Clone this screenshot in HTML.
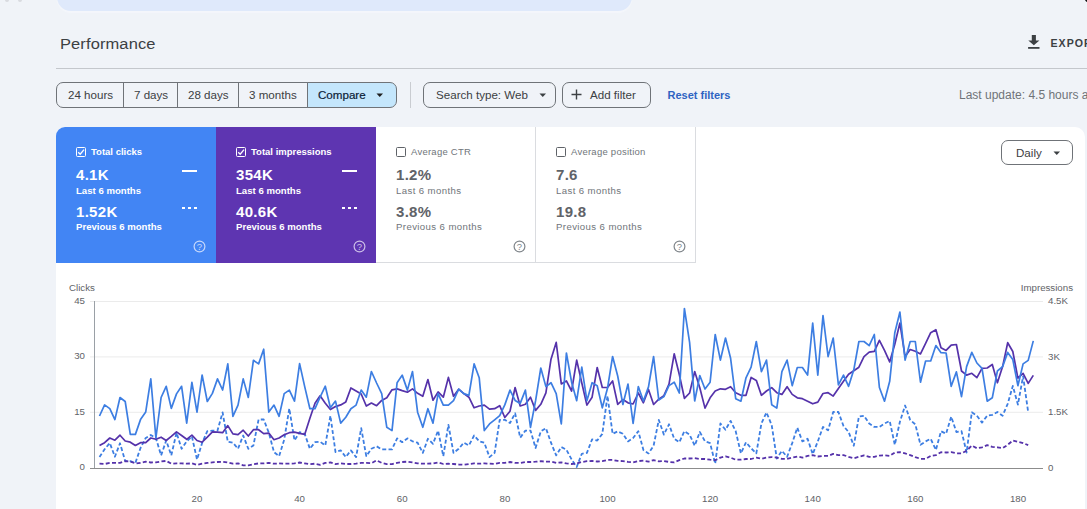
<!DOCTYPE html>
<html><head><meta charset="utf-8">
<style>
*{box-sizing:border-box;margin:0;padding:0}
html,body{width:1087px;height:509px;overflow:hidden}
body{background:#f0f3f8;font-family:"Liberation Sans",sans-serif;color:#3c4043;position:relative}
.abs{position:absolute}
#topbar{left:57px;top:-20px;width:575px;height:31px;background:#dfe9fb;border-radius:0 0 14px 14px;box-shadow:0 2px 1px #f4f6fb}
#title{left:60px;top:35px;font-size:15.2px;letter-spacing:0.1px;transform:scaleX(1.085);transform-origin:0 0;color:#3c4043;white-space:nowrap}
#hr{left:56px;top:68px;width:1031px;height:1px;background:#c4c7cc}
#export{left:1050.5px;top:36.8px;font-size:10.6px;font-weight:bold;letter-spacing:1px;color:#3c4043;white-space:nowrap}
.seg{position:absolute;top:82px;height:26px;border:1px solid #6f7378;font-size:11.6px;line-height:24px;color:#3c4043;white-space:nowrap}
.btn{position:absolute;top:82px;height:26px;border:1px solid #6f7378;border-radius:7px;font-size:11.6px;line-height:24px;color:#3c4043;white-space:nowrap}
#card{left:56px;top:127px;width:1029px;height:400px;background:#fff;border-radius:9px 10px 0 0}
.tile{position:absolute;top:127px;width:160px;height:136px}
.tile .lab{position:absolute;left:35px;top:19px;font-size:9.5px;font-weight:bold;white-space:nowrap}
.tile .v1{position:absolute;left:20px;top:39px;letter-spacing:0.3px;font-size:15px;font-weight:bold;white-space:nowrap}
.tile .s1{position:absolute;left:20px;top:58px;font-size:9.6px;font-weight:bold;white-space:nowrap}
.tile .v2{position:absolute;left:20px;top:76px;letter-spacing:0.3px;font-size:15px;font-weight:bold;white-space:nowrap}
.tile .s2{position:absolute;left:20px;top:94px;font-size:9.6px;font-weight:bold;white-space:nowrap}
.cb{position:absolute;left:20px;top:20px;width:10px;height:10px;border:1.3px solid #fff;border-radius:1.5px}
.wt .lab,.wt .s1,.wt .s2{font-weight:normal;color:#70757a;letter-spacing:0.4px}
.wt .lab{letter-spacing:0.25px}
.ax{font-family:"Liberation Sans",sans-serif;font-size:9.7px;fill:#5f6368}
</style></head><body>
<div class="abs" id="topbar"></div>
<div class="abs" style="left:1083.5px;top:-10px;width:13px;height:12.5px;border-radius:50%;background:#111"></div>
<div class="abs" style="left:5px;top:-2.5px;width:4px;height:4px;border-radius:50%;background:#d9dbe0"></div>
<div class="abs" style="left:17.5px;top:-2.5px;width:4px;height:4px;border-radius:50%;background:#d9dbe0"></div>
<div class="abs" id="title">Performance</div>
<svg class="abs" style="left:1027px;top:34px" width="14" height="16" viewBox="0 0 14 16">
<path d="M4.8 1h4.1v5.5h3.5L6.85 11.2 1.3 6.5h3.5z" fill="#3c4043"/><rect x="1.1" y="13" width="11.4" height="1.8" fill="#3c4043"/></svg>
<div class="abs" id="export">EXPORT</div>
<div class="abs" id="hr"></div>

<div class="seg" style="left:56px;width:68px;border-radius:7px 0 0 7px;padding-left:11px">24 hours</div>
<div class="seg" style="left:123px;width:55px;border-left:1px solid #6f7378;padding-left:10px">7 days</div>
<div class="seg" style="left:177px;width:62px;padding-left:10px">28 days</div>
<div class="seg" style="left:238px;width:70px;padding-left:10px">3 months</div>
<div class="seg" style="left:307px;width:90px;border-radius:0 7px 7px 0;background:#c4e6fc;color:#0b2137;padding-left:10px;-webkit-text-stroke:0.2px #0b2137">Compare
<svg style="position:absolute;left:68px;top:10px" width="8" height="5"><path d="M0.5 0.5h6.5L3.75 4z" fill="#1f1f1f"/></svg></div>
<div class="abs" style="left:410px;top:82px;width:1px;height:26px;background:#c9ccd1"></div>
<div class="btn" style="left:423px;width:133px;padding-left:12px">Search type: Web
<svg style="position:absolute;left:115px;top:10px" width="8" height="5"><path d="M0.5 0.5h6.5L3.75 4z" fill="#3c4043"/></svg></div>
<div class="btn" style="left:562px;width:89px;padding-left:27px">Add filter
<svg style="position:absolute;left:8px;top:6px" width="11" height="11"><path d="M5.5 0.5v10M0.5 5.5h10" stroke="#3c4043" stroke-width="1.4"/></svg></div>
<div class="abs" style="left:667.5px;top:90.1px;font-size:11px;line-height:11px;font-weight:bold;color:#2f63c2;white-space:nowrap">Reset filters</div>
<div class="abs" style="left:959px;top:88px;font-size:12px;color:#6f7378;white-space:nowrap">Last update: 4.5 hours ago</div>

<div class="abs" id="card"></div>

<div class="tile" style="left:56px;background:#4285f4;color:#fff;border-radius:9px 0 0 0">
 <div class="cb"><svg width="8" height="8" style="position:absolute;left:0;top:0"><path d="M1.2 4.2l2 2 3.8-4.6" fill="none" stroke="#fff" stroke-width="1.3"/></svg></div>
 <div class="lab">Total clicks</div>
 <div class="v1">4.1K</div><div class="s1">Last 6 months</div>
 <div class="v2">1.52K</div><div class="s2">Previous 6 months</div>
 <div class="abs" style="left:126px;top:43px;width:15px;height:2px;background:#fff"></div>
 <div class="abs" style="left:126px;top:80px;width:15px;height:2px;background:repeating-linear-gradient(90deg,#fff 0 3px,transparent 3px 6px)"></div>
 <svg class="abs" style="left:137px;top:113px" width="13" height="13"><circle cx="6.5" cy="6.5" r="5.4" fill="none" stroke="#c6d8fb" stroke-width="1.2"/><text x="6.5" y="9.9" font-size="9.5" text-anchor="middle" fill="#c6d8fb" font-family="Liberation Sans">?</text></svg>
</div>
<div class="tile" style="left:216px;background:#5e35b1;color:#fff">
 <div class="cb"><svg width="8" height="8" style="position:absolute;left:0;top:0"><path d="M1.2 4.2l2 2 3.8-4.6" fill="none" stroke="#fff" stroke-width="1.3"/></svg></div>
 <div class="lab">Total impressions</div>
 <div class="v1">354K</div><div class="s1">Last 6 months</div>
 <div class="v2">40.6K</div><div class="s2">Previous 6 months</div>
 <div class="abs" style="left:126px;top:43px;width:15px;height:2px;background:#fff"></div>
 <div class="abs" style="left:126px;top:80px;width:15px;height:2px;background:repeating-linear-gradient(90deg,#fff 0 3px,transparent 3px 6px)"></div>
 <svg class="abs" style="left:137px;top:113px" width="13" height="13"><circle cx="6.5" cy="6.5" r="5.4" fill="none" stroke="#cdbfe8" stroke-width="1.2"/><text x="6.5" y="9.9" font-size="9.5" text-anchor="middle" fill="#cdbfe8" font-family="Liberation Sans">?</text></svg>
</div>
<div class="tile wt" style="left:376px;color:#5f6368;border-right:1px solid #dadce0;border-bottom:1px solid #dadce0">
 <div class="cb" style="border-color:#5f6368"></div>
 <div class="lab">Average CTR</div>
 <div class="v1">1.2%</div><div class="s1">Last 6 months</div>
 <div class="v2">3.8%</div><div class="s2">Previous 6 months</div>
 <svg class="abs" style="left:137px;top:113px" width="13" height="13"><circle cx="6.5" cy="6.5" r="5.4" fill="none" stroke="#80868b" stroke-width="1.2"/><text x="6.5" y="9.9" font-size="9.5" text-anchor="middle" fill="#80868b" font-family="Liberation Sans">?</text></svg>
</div>
<div class="tile wt" style="left:536px;color:#5f6368;border-right:1px solid #dadce0;border-bottom:1px solid #dadce0">
 <div class="cb" style="border-color:#5f6368"></div>
 <div class="lab">Average position</div>
 <div class="v1">7.6</div><div class="s1">Last 6 months</div>
 <div class="v2">19.8</div><div class="s2">Previous 6 months</div>
 <svg class="abs" style="left:137px;top:113px" width="13" height="13"><circle cx="6.5" cy="6.5" r="5.4" fill="none" stroke="#80868b" stroke-width="1.2"/><text x="6.5" y="9.9" font-size="9.5" text-anchor="middle" fill="#80868b" font-family="Liberation Sans">?</text></svg>
</div>

<div class="btn" style="left:1001px;top:140px;width:72px;height:25px;line-height:23px;padding-left:14px;font-size:11.6px">Daily
<svg style="position:absolute;left:51px;top:9.5px" width="8" height="5"><path d="M0.5 0.5h6.5L3.75 4z" fill="#3c4043"/></svg></div>

<svg class="abs" style="left:0;top:0" width="1087" height="509">
<g stroke="#ebebeb" stroke-width="1">
<line x1="90" y1="301.5" x2="1043" y2="301.5"/>
<line x1="90" y1="356.9" x2="1043" y2="356.9"/>
<line x1="90" y1="412.3" x2="1043" y2="412.3"/>
</g>
<line x1="94.5" y1="301" x2="94.5" y2="468" stroke="#9aa0a6" stroke-width="1"/>
<line x1="90" y1="468.5" x2="1043" y2="468.5" stroke="#8c8c8c" stroke-width="1"/>
<text class="ax" x="69" y="291">Clicks</text>
<text class="ax" x="1073" y="291" text-anchor="end">Impressions</text>
<g class="ax" text-anchor="end">
<text x="85" y="303.5">45</text><text x="85" y="359">30</text><text x="85" y="414.5">15</text><text x="85" y="470">0</text>
</g>
<g class="ax">
<text x="1048" y="304">4.5K</text><text x="1048" y="359.5">3K</text><text x="1048" y="415">1.5K</text><text x="1048" y="470.8">0</text>
</g>
<g class="ax" text-anchor="middle">
<text x="197" y="502">20</text><text x="299.6" y="502">40</text><text x="402.2" y="502">60</text><text x="504.9" y="502">80</text><text x="607.5" y="502">100</text><text x="710.1" y="502">120</text><text x="812.7" y="502">140</text><text x="915.4" y="502">160</text><text x="1018" y="502">180</text>
</g>

<polyline points="99.5,457.1 104.6,449.3 109.8,443.0 114.9,456.7 120.0,443.3 125.2,460.9 130.3,461.2 135.4,462.9 140.5,448.0 145.7,438.0 150.8,435.0 155.9,438.0 161.1,455.4 166.2,440.5 171.3,455.4 176.5,432.7 181.6,448.8 186.7,441.3 191.9,436.4 197.0,459.5 202.1,443.0 207.3,431.1 212.4,430.6 217.5,430.6 222.6,412.4 227.8,441.8 232.9,442.7 238.0,448.8 243.2,435.5 248.3,448.8 253.4,445.5 258.6,419.5 263.7,419.5 268.8,432.7 274.0,452.1 279.1,456.2 284.2,439.7 289.3,408.5 294.5,440.5 299.6,432.2 304.7,433.9 309.9,448.8 315.0,442.2 320.1,441.7 325.3,445.5 330.4,415.7 335.5,452.1 340.7,450.4 345.8,457.1 350.9,450.4 356.1,457.1 361.2,428.1 366.3,456.2 371.4,448.8 376.6,446.3 381.7,449.3 386.8,449.3 392.0,449.3 397.1,438.4 402.2,442.2 407.4,438.4 412.5,441.3 417.6,442.7 422.8,452.9 427.9,438.8 433.0,443.8 438.1,430.6 443.3,456.2 448.4,424.8 453.5,452.9 458.7,448.8 463.8,442.7 468.9,445.5 474.1,435.5 479.2,441.3 484.3,442.7 489.5,457.1 494.6,452.9 499.7,419.8 504.8,419.8 510.0,423.1 515.1,413.2 520.2,437.7 525.4,430.6 530.5,430.6 535.6,448.0 540.8,431.4 545.9,428.1 551.0,442.7 556.2,455.4 561.3,447.1 566.4,449.6 571.6,459.5 576.7,467.0 581.8,453.8 586.9,452.9 592.1,439.3 597.2,440.5 602.3,433.9 607.5,395.8 612.6,433.9 617.7,431.4 622.9,433.7 628.0,441.4 633.1,438.0 638.3,431.2 643.4,450.0 648.5,453.4 653.6,445.7 658.8,420.0 663.9,434.6 669.0,424.3 674.2,438.8 679.3,442.3 684.4,431.2 689.6,434.6 694.7,445.7 699.8,432.0 705.0,441.4 710.1,443.1 715.2,463.6 720.4,423.5 725.5,429.8 730.6,420.9 735.7,431.2 740.9,453.4 746.0,442.3 751.1,448.2 756.3,453.4 761.4,423.5 766.5,412.4 771.7,425.2 776.8,458.5 781.9,450.8 787.1,456.8 792.2,443.1 797.3,427.7 802.4,441.4 807.6,438.8 812.7,454.2 817.8,441.4 823.0,426.9 828.1,430.3 833.2,412.0 838.4,412.0 843.5,426.0 848.6,432.0 853.8,445.7 858.9,416.6 864.0,415.8 869.2,423.5 874.3,426.9 879.4,426.9 884.5,423.5 889.7,420.9 894.8,444.8 899.9,421.8 905.1,405.5 910.2,420.0 915.3,424.3 920.5,444.8 925.6,441.4 930.7,438.8 935.9,450.0 941.0,431.2 946.1,433.7 951.2,416.6 956.4,432.0 961.5,431.1 966.6,452.5 971.8,412.3 976.9,415.7 982.0,422.6 987.2,415.7 992.3,414.9 997.4,412.0 1002.6,415.7 1007.7,403.8 1012.8,385.9 1017.9,404.6 1023.1,376.3 1028.2,412.3" fill="none" stroke="#3d7ee2" stroke-width="1.8" stroke-dasharray="4 2.3" stroke-linejoin="round"/>
<polyline points="99.5,463.7 104.6,464.0 109.8,462.9 114.9,462.9 120.0,462.9 125.2,461.2 130.3,461.5 135.4,463.4 140.5,462.9 145.7,461.7 150.8,462.5 155.9,462.4 161.1,461.5 166.2,460.9 171.3,463.7 176.5,463.4 181.6,463.4 186.7,463.7 191.9,463.4 197.0,464.8 202.1,463.7 207.3,462.9 212.4,462.4 217.5,462.0 222.6,461.7 227.8,462.4 232.9,463.7 238.0,463.4 243.2,465.3 248.3,465.3 253.4,464.2 258.6,463.4 263.7,463.4 268.8,462.9 274.0,463.7 279.1,463.4 284.2,463.7 289.3,463.7 294.5,463.4 299.6,462.5 304.7,463.4 309.9,464.2 315.0,463.7 320.1,464.8 325.3,462.9 330.4,462.4 335.5,464.2 340.7,463.4 345.8,464.0 350.9,464.0 356.1,463.7 361.2,462.9 366.3,462.9 371.4,463.2 376.6,460.4 381.7,462.9 386.8,464.2 392.0,464.2 397.1,462.9 402.2,462.0 407.4,461.7 412.5,462.4 417.6,463.4 422.8,463.7 427.9,463.7 433.0,463.4 438.1,462.4 443.3,464.0 448.4,463.7 453.5,464.0 458.7,464.5 463.8,464.8 468.9,464.0 474.1,463.4 479.2,463.7 484.3,463.4 489.5,463.7 494.6,464.0 499.7,462.9 504.8,462.9 510.0,462.0 515.1,462.9 520.2,462.9 525.4,462.0 530.5,462.0 535.6,461.7 540.8,461.2 545.9,461.7 551.0,461.7 556.2,462.9 561.3,462.4 566.4,463.4 571.6,464.0 576.7,463.4 581.8,462.0 586.9,461.2 592.1,460.9 597.2,461.5 602.3,461.2 607.5,459.9 612.6,459.9 617.7,460.9 622.9,461.1 628.0,461.9 633.1,462.4 638.3,461.1 643.4,460.7 648.5,461.6 653.6,460.2 658.8,461.4 663.9,461.1 669.0,461.9 674.2,462.4 679.3,460.2 684.4,458.5 689.6,458.5 694.7,458.2 699.8,459.0 705.0,459.0 710.1,459.7 715.2,460.2 720.4,457.6 725.5,456.3 730.6,457.6 735.7,459.7 740.9,459.7 746.0,459.0 751.1,459.0 756.3,457.6 761.4,458.8 766.5,457.6 771.7,457.1 776.8,457.6 781.9,458.8 787.1,458.8 792.2,457.6 797.3,456.5 802.4,457.6 807.6,455.9 812.7,455.1 817.8,456.5 823.0,455.9 828.1,455.9 833.2,453.9 838.4,455.1 843.5,455.1 848.6,456.8 853.8,458.2 858.9,456.8 864.0,455.4 869.2,456.8 874.3,456.8 879.4,455.6 884.5,455.4 889.7,455.9 894.8,452.5 899.9,452.2 905.1,453.4 910.2,455.1 915.3,457.1 920.5,458.8 925.6,458.8 930.7,455.9 935.9,455.1 941.0,452.2 946.1,452.5 951.2,452.2 956.4,453.3 961.5,453.3 966.6,450.7 971.8,445.6 976.9,448.2 982.0,447.3 987.2,445.1 992.3,446.8 997.4,447.3 1002.6,448.2 1007.7,444.8 1012.8,440.5 1017.9,441.7 1023.1,443.1 1028.2,445.1" fill="none" stroke="#5532aa" stroke-width="1.8" stroke-dasharray="4 2.3" stroke-linejoin="round"/>
<polyline points="99.5,445.5 104.6,442.7 109.8,438.0 114.9,440.2 120.0,435.2 125.2,441.0 130.3,442.2 135.4,445.5 140.5,442.7 145.7,442.7 150.8,438.0 155.9,439.3 161.1,437.2 166.2,440.5 171.3,436.4 176.5,431.9 181.6,435.5 186.7,439.3 191.9,435.2 197.0,440.5 202.1,442.2 207.3,437.2 212.4,431.9 217.5,432.2 222.6,432.7 227.8,425.6 232.9,433.9 238.0,434.7 243.2,430.2 248.3,436.0 253.4,429.7 258.6,429.7 263.7,433.6 268.8,433.1 274.0,439.7 279.1,438.0 284.2,434.7 289.3,432.7 294.5,432.2 299.6,433.4 304.7,434.4 309.9,418.2 315.0,403.2 320.1,395.8 325.3,403.2 330.4,409.5 335.5,406.6 340.7,404.9 345.8,401.9 350.9,388.0 356.1,391.0 361.2,394.0 366.3,406.0 371.4,403.0 376.6,405.7 381.7,400.4 386.8,397.7 392.0,389.8 397.1,388.9 402.2,390.6 407.4,392.2 412.5,388.9 417.6,393.3 422.8,396.3 427.9,379.5 433.0,400.2 438.1,391.9 443.3,397.2 448.4,377.4 453.5,396.3 458.7,389.2 463.8,393.6 468.9,397.2 474.1,407.8 479.2,406.0 484.3,405.1 489.5,409.2 494.6,408.7 499.7,405.7 504.8,417.5 510.0,411.3 515.1,387.5 520.2,406.0 525.4,404.3 530.5,397.2 535.6,410.4 540.8,404.3 545.9,392.8 551.0,359.2 556.2,342.4 561.3,383.9 566.4,380.9 571.6,391.0 576.7,360.1 581.8,383.0 586.9,405.1 592.1,397.2 597.2,367.5 602.3,387.5 607.5,387.5 612.6,380.9 617.7,404.3 622.9,399.5 628.0,402.8 633.1,404.0 638.3,393.0 643.4,402.8 648.5,389.5 653.6,404.5 658.8,399.2 663.9,395.7 669.0,384.2 674.2,353.8 679.3,374.5 684.4,398.3 689.6,393.0 694.7,371.5 699.8,387.7 705.0,408.1 710.1,397.8 715.2,391.0 720.4,388.8 725.5,389.3 730.6,386.7 735.7,392.7 740.9,395.3 746.0,395.3 751.1,377.4 756.3,380.4 761.4,395.3 766.5,391.0 771.7,387.6 776.8,392.7 781.9,394.4 787.1,386.7 792.2,394.4 797.3,397.8 802.4,398.7 807.6,401.2 812.7,403.8 817.8,402.1 823.0,393.5 828.1,392.7 833.2,396.1 838.4,388.4 843.5,381.3 848.6,374.3 853.8,370.7 858.9,367.2 864.0,356.6 869.2,352.2 874.3,351.3 879.4,340.3 884.5,350.4 889.7,361.9 894.8,344.2 899.9,323.0 905.1,356.6 910.2,349.5 915.3,351.3 920.5,353.9 925.6,343.3 930.7,332.7 935.9,329.7 941.0,347.7 946.1,350.4 951.2,345.1 956.4,344.5 961.5,371.0 966.6,375.1 971.8,373.3 976.9,377.7 982.0,368.3 987.2,368.0 992.3,364.5 997.4,382.8 1002.6,366.6 1007.7,342.7 1012.8,351.5 1017.9,378.1 1023.1,373.3 1028.2,383.4 1033.3,375.4" fill="none" stroke="#5532aa" stroke-width="1.7" stroke-linejoin="round"/>
<polyline points="99.5,416.0 104.6,404.9 109.8,408.6 114.9,419.6 120.0,397.5 125.2,401.5 130.3,434.4 135.4,434.4 140.5,419.6 145.7,412.1 150.8,378.9 155.9,438.0 161.1,397.5 166.2,386.3 171.3,408.4 176.5,393.9 181.6,386.3 186.7,423.1 191.9,382.4 197.0,412.1 202.1,375.0 207.3,401.5 212.4,393.4 217.5,378.9 222.6,390.0 227.8,363.9 232.9,416.4 238.0,405.1 243.2,378.9 248.3,397.5 253.4,360.3 258.6,363.9 263.7,349.2 268.8,412.1 274.0,405.1 279.1,416.3 284.2,393.6 289.3,390.1 294.5,401.1 299.6,363.6 304.7,386.6 309.9,408.7 315.0,408.7 320.1,397.2 325.3,386.2 330.4,407.8 335.5,401.1 340.7,423.1 345.8,417.3 350.9,408.7 356.1,405.1 361.2,390.1 366.3,397.2 371.4,371.5 376.6,383.0 381.7,393.6 386.8,427.3 392.0,430.6 397.1,382.7 402.2,375.1 407.4,390.1 412.5,371.5 417.6,412.2 422.8,427.3 427.9,408.7 433.0,423.1 438.1,393.6 443.3,405.1 448.4,405.1 453.5,400.7 458.7,389.2 463.8,393.6 468.9,395.4 474.1,363.9 479.2,377.7 484.3,430.6 489.5,423.9 494.6,419.8 499.7,415.7 504.8,404.9 510.0,390.1 515.1,400.4 520.2,403.4 525.4,390.1 530.5,427.3 535.6,400.7 540.8,368.0 545.9,386.6 551.0,382.7 556.2,393.6 561.3,423.9 566.4,353.0 571.6,382.2 576.7,400.7 581.8,367.1 586.9,400.7 592.1,382.7 597.2,385.7 602.3,407.8 607.5,388.3 612.6,356.5 617.7,376.0 622.9,404.5 628.0,384.0 633.1,423.5 638.3,386.5 643.4,401.0 648.5,386.9 653.6,356.5 658.8,400.1 663.9,396.6 669.0,385.6 674.2,382.2 679.3,393.0 684.4,308.5 689.6,342.4 694.7,401.0 699.8,375.5 705.0,389.0 710.1,382.2 715.2,334.5 720.4,360.1 725.5,338.0 730.6,358.3 735.7,398.7 740.9,401.2 746.0,377.8 751.1,367.2 756.3,341.5 761.4,371.6 766.5,360.1 771.7,404.7 776.8,408.1 781.9,371.6 787.1,360.1 792.2,385.7 797.3,367.5 802.4,367.5 807.6,375.1 812.7,323.0 817.8,375.1 823.0,315.6 828.1,356.6 833.2,338.0 838.4,384.9 843.5,375.1 848.6,386.3 853.8,369.8 858.9,341.5 864.0,341.5 869.2,345.6 874.3,334.5 879.4,387.5 884.5,401.2 889.7,381.3 894.8,332.7 899.9,312.0 905.1,360.1 910.2,341.5 915.3,341.5 920.5,382.2 925.6,361.0 930.7,361.0 935.9,345.6 941.0,352.7 946.1,353.0 951.2,386.3 956.4,371.9 961.5,396.6 966.6,366.6 971.8,352.4 976.9,363.0 982.0,368.3 987.2,401.2 992.3,397.8 997.4,371.0 1002.6,366.6 1007.7,352.4 1012.8,359.5 1017.9,385.7 1023.1,363.9 1028.2,360.4 1033.3,340.9" fill="none" stroke="#3d7ee2" stroke-width="1.7" stroke-linejoin="round"/>

</svg>
</body></html>
